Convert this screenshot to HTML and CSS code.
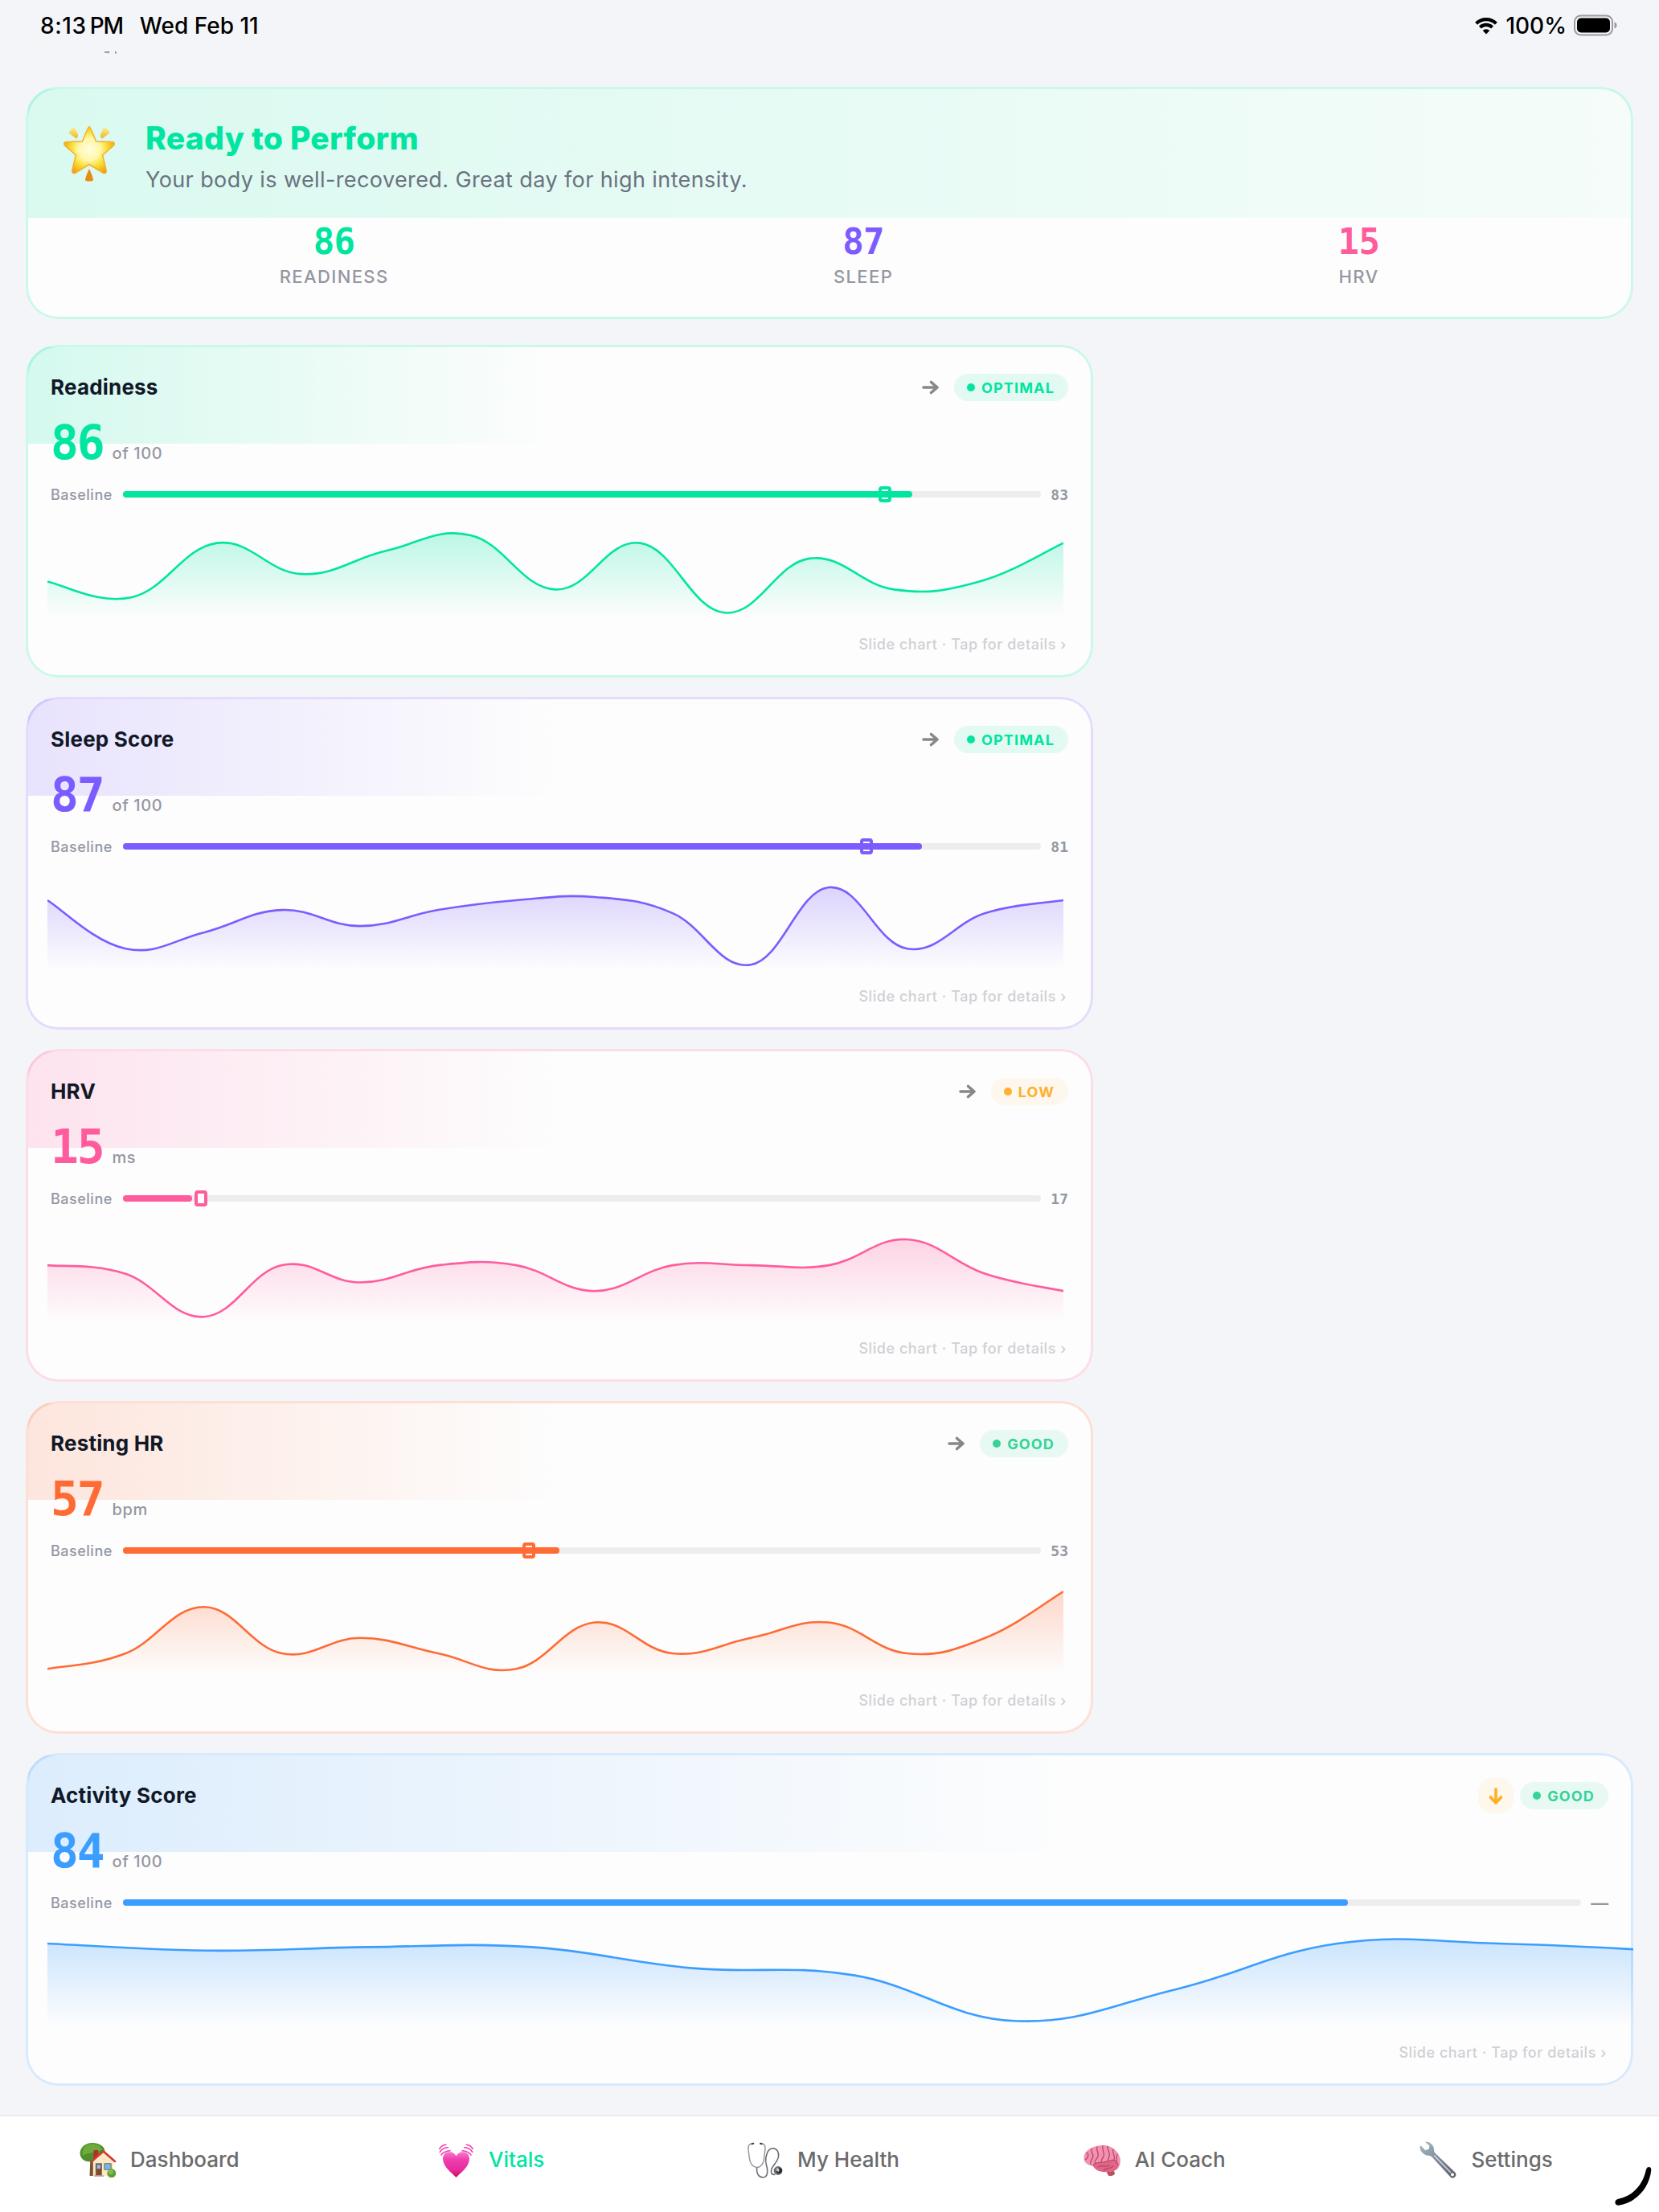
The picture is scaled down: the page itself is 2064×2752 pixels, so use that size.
FILE: index.html
```html
<!DOCTYPE html>
<html lang="en">
<head>
    <meta charset="UTF-8">
    <meta name="viewport" content="width=device-width, initial-scale=1.0">
    <title>Vitals</title>
    <link rel="stylesheet" href="styles.css">
</head>
<body>

    <div class="status-bar">
        <div class="status-left">
            <span class="status-time">8:13<span class="status-pm">PM</span></span>
            <span>Wed Feb 11</span>
        </div>
        <div class="status-right">
            <svg class="wifi" viewBox="0 0 30 22">
                <path d="M2.6 8.2a17.5 17.5 0 0 1 24.8 0" />
                <path d="M7.4 13a10.8 10.8 0 0 1 15.2 0" />
                <path class="wifi-dot" d="M15 21.5l-4.3-4.6a6.2 6.2 0 0 1 8.6 0z" />
            </svg>
            <span>100%</span>
            <svg class="battery" viewBox="0 0 54 28">
                <rect class="battery-shell" x="1" y="1.5" width="47" height="24" rx="7.5" />
                <rect x="4" y="4.5" width="41" height="18" rx="5" />
                <path class="battery-cap" d="M50.5 9.5c2.2.6 3 2.2 3 4s-.8 3.4-3 4z" />
            </svg>
        </div>
    </div>

    <main class="content">
        <svg class="scrolled-text" viewBox="0 0 24 4">
            <path d="M1 .8h5l-1 1.4M15 0v2.500" />
        </svg>

        <section class="hero tint-green">
            <div class="hero-top">
                <svg class="hero-icon" viewBox="0 0 64 70">
                    <defs>
                        <radialGradient id="star" cx="32" cy="30" r="36" gradientUnits="userSpaceOnUse">
                            <stop offset="0" stop-color="#fffde0" />
                            <stop offset=".38" stop-color="#fff7a8" />
                            <stop offset=".62" stop-color="#fbdd33" />
                            <stop offset="1" stop-color="#ee8f10" />
                        </radialGradient>
                        <linearGradient id="ray" x1="0" y1="0" x2="0" y2="1">
                            <stop offset="0" stop-color="#fdf08c" />
                            <stop offset="1" stop-color="#efb52c" />
                        </linearGradient>
                    </defs>
                    <path fill="url(#ray)" d="M13.500 2C10 4 7.500 7 6.500 9.500L16 16.500C19 14 18 12 17.500 10zM50.500 2C54 4 56.500 7 57.500 9.500L48 16.500C45 14 46 12 46.500 10z" />
                    <path fill="#e98a12" d="M32 54c2 4 4 9 5 13.500 0 1.500-1.500 2-5 2s-5-.5-5-2C28 63 30 58 32 54z" />
                    <path fill="url(#star)" stroke="#f3b02a" stroke-width="1.500" stroke-linejoin="round" d="M32 1.500c1.500 0 7.500 16 8.500 18.500 4 .5 18 .2 21 .8 2.500.7 2 3.200.5 4.700L48.500 37c1 4 4.500 16.500 4.700 19.500.2 3-2 3.700-4.200 2.500L32 48.500 15 59c-2.200 1.200-4.400.5-4.200-2.500.2-3 3.700-15.500 4.700-19.500L2 25.500c-1.500-1.500-2-4 .5-4.700 3-.6 17-.3 21-.8C24.500 17.500 30.500 1.500 32 1.500z" />
                </svg>
                <div>
                    <h1>Ready to Perform</h1>
                    <p class="hero-sub">Your body is well-recovered. Great day for high intensity.</p>
                </div>
            </div>
            <div class="hero-stats">
                <div class="stat tint-green"><b>86</b><span>READINESS</span></div>
                <div class="stat tint-purple"><b>87</b><span>SLEEP</span></div>
                <div class="stat tint-pink"><b>15</b><span>HRV</span></div>
            </div>
        </section>

        <div id="cards" class="cards">
            <!-- metric cards are rendered by the script below -->
        </div>
    </main>

    <nav class="tab-bar">
        <a class="tab">
            <svg viewBox="0 0 48 48">
                <path fill="#7a5230" d="M14.500 20h5v24h-6z" />
                <path fill="#4f8f2c" d="M17 3c8 0 15.500 4 15.500 11S25 26 15 26.500C7 27 1.500 22 1.500 16S7 3 17 3z" />
                <path fill="#6cab3c" d="M16 4.500c7 0 12 2.500 13 7-4 3-8 1-12 3.500-4 2-9 1-12 4-2-7 2-14.500 11-14.500z" />
                <path fill="#b3302a" d="M18.500 12H24v8l-5.500 4z" />
                <path fill="#fbe9c6" d="M30.500 14L43 26v18.300H17.800V26z" />
                <path fill="none" stroke="#d8362f" stroke-width="2.600" stroke-linejoin="round" stroke-linecap="round" d="M16 26l14.600-12.600L45 26" />
                <path fill="#8a4526" stroke="#6b6f7c" stroke-width=".8" d="M21.200 28.700h7.300v14.800h-7.300z" />
                <path fill="#7fc4f5" d="M22.700 30.200h4.300v5h-4.300z" />
                <path fill="#6fb7f0" stroke="#8a6a4a" stroke-width="1" d="M31.800 28.700h8.400v7.600h-8.400z" />
                <path fill="#b9aa98" d="M19 43.300h12v1.700H19z" />
                <circle cx="40.800" cy="40.800" r="5.500" fill="#5f9e35" />
                <circle cx="39.800" cy="39.300" r="3" fill="#83bd4c" />
            </svg>
            <span>Dashboard</span>
        </a>
        <a class="tab active">
            <svg viewBox="0 0 48 48">
                <defs>
                    <linearGradient id="heart" x1="0" y1="0" x2="0" y2="1">
                        <stop offset="0" stop-color="#f77cc8" />
                        <stop offset=".3" stop-color="#ef3fb0" />
                        <stop offset=".7" stop-color="#e82a9d" />
                        <stop offset="1" stop-color="#cc0d55" />
                    </linearGradient>
                </defs>
                <path fill="url(#heart)" d="M23.500 46C18 40 7 33 7 22.500c0-5 3.500-8.300 8-8.300 4 0 7 2 8.500 5.300 1.500-3.300 4.500-5.300 8.500-5.300 4.500 0 8 3.300 8 8.300C40 33 29 40 23.500 46z" />
                <path fill="none" stroke="#f03cb2" stroke-width="1.600" stroke-linecap="round" d="M2.800 10.500c1.700-3.200 4.500-5 8-5.300M3.300 14.500c2-3.500 5.500-5.500 10-5.700M5 18c2-3 5.500-5 11-5.300M44.200 10.500c-1.700-3.200-4.500-5-8-5.300M43.700 14.500c-2-3.500-5.500-5.500-10-5.700M42 18c-2-3-5.500-5-11-5.300" />
            </svg>
            <span>Vitals</span>
        </a>
        <a class="tab">
            <svg viewBox="0 0 48 48">
                <path fill="none" stroke="#96999e" stroke-width="1.500" stroke-linecap="round" d="M9 4C4.500 3.500 2.500 6 3 11l1.500 12c.8 6 4.500 10.500 9 10.500s8.300-4 9-10.500L24 10c.3-4-1.500-6.500-5.500-6" />
                <path fill="none" stroke="#696c71" stroke-width="1.600" stroke-linecap="round" d="M13.500 34c-.5 7 2.500 12 7.500 12s6.500-5 5.500-11c-.9-5-3-8-1.500-14.500C26.300 14 29 9.700 33.500 9.700s8 4.300 7 10.300c-1 7-7 10.500-8.700 16-1.300 4.300.5 7 4 6.500" />
                <path fill="none" stroke="#3a3c40" stroke-width="2" stroke-linecap="round" d="M7.500 4.200l1.800-.5M18 3.700l1.800.5" />
                <circle cx="40" cy="37.500" r="5.400" fill="#6a6d73" />
                <circle cx="41.300" cy="37.300" r="3.600" fill="#26282c" />
                <path fill="#c4c8ce" d="M38.800 33.500l3 2.300-1 3.500-3.400-2z" />
            </svg>
            <span>My Health</span>
        </a>
        <a class="tab">
            <svg viewBox="0 0 48 48">
                <path fill="#b5525f" d="M26 33h10l3 8c0 2.500-7 4.500-8.500 2z" />
                <path fill="#f391ae" d="M23 6c10-1 21 6 22.700 17 1 7-2.200 14-8.700 15-5 .8-8 1.700-13 .8-6-.8-10-2.800-12-7C6 31 .5 28 .5 21.500.5 13 11 6.500 23 6z" />
                <path fill="#e06688" d="M12 31c5-5 14-2 22-6 3-1.500 7 1 9.500 6-1 4-4 7-9 7.500-5 .5-8 1.300-12 .3-5-1-9-3-10.500-7.800z" />
                <path fill="none" stroke="#b8486a" stroke-width="1.300" stroke-linecap="round" d="M4 15c3 2 2 7-2 9M10 10.500c-1 5 4 7 1 12-1.500 2-3 4-2 7M17 8c-2 5 3 7 1 12-1 3-4 4-4 8M24 6.500c-2 5 3 8 1 13-1 3-3 4-3 7M30 7.500c-1 5 4 7 2 12-.8 3-2 4-1.500 6.500M37 11c-2 4 3 7 1 13M42 17c-2 3 1 7-1.500 10M12 31c4-6 13-2 21-6 5-2 9 1 10 5M18 33c5-3 9 1 14-2M25 38c2-4 8-2 12-6" />
            </svg>
            <span>AI Coach</span>
        </a>
        <a class="tab">
            <svg viewBox="0 0 48 48">
                <defs>
                    <linearGradient id="steel" x1="0" y1="0" x2="1" y2="1">
                        <stop offset="0" stop-color="#a9bccb" />
                        <stop offset=".5" stop-color="#7c8896" />
                        <stop offset="1" stop-color="#5f5c68" />
                    </linearGradient>
                </defs>
                <path fill="url(#steel)" d="M8.500 1.500c5.500.5 9.500 5 9.500 9.800 0 1.700.3 3 1.500 4.500L44.500 40c3 3.500-2 8.500-5.500 6L15.500 20.500C14 19 12.500 18.700 11 18.700 5.500 18.500.8 14 .5 8.500c0-2 1.200-2.400 2.300-1L7 12l4.500-1 1-4.500-4.200-3.600c-.8-.8-.7-1.400.2-1.400z" />
                <path fill="none" stroke="#cfdce6" stroke-width="1.500" stroke-linecap="round" d="M18.500 19l20 20.500" />
                <circle cx="41" cy="42.500" r="1.900" fill="#fff" />
            </svg>
            <span>Settings</span>
        </a>
    </nav>

    <svg class="corner-stroke" viewBox="0 0 50 50">
        <path d="M43.500 2.500C46.500 1 48.500 2.500 48.300 6 46 28 30 46 8 49.800 3 50 1.500 44 6.500 42 26 38 38 24 42 5z" />
    </svg>

    <script>
        const cards = [
            { title: 'Readiness', tint: 'green', value: 86, unit: 'of 100', fill: 86, mark: 83, baseline: '83', trend: 'flat', status: 'optimal', step: 1264 / 12,
              data: [4, 2, 9, 5, 8, 10, 3, 9, 0, 7, 3, 4, 9] },
            { title: 'Sleep Score', tint: 'purple', value: 87, unit: 'of 100', fill: 87, mark: 81, baseline: '81', trend: 'flat', status: 'optimal', step: 1264 / 13,
              data: [20, 5, 10, 17, 12, 17, 20, 21, 16, 0, 24, 5, 16, 20] },
            { title: 'HRV', tint: 'pink', value: 15, unit: 'ms', fill: 7.5, mark: 8.5, baseline: '17', trend: 'flat', status: 'low', step: 1264 / 13,
              data: [6, 5, 0, 6, 4, 6, 6, 3, 6, 6, 6, 9, 5, 3] },
            { title: 'Resting HR', tint: 'orange', value: 57, unit: 'bpm', fill: 47.5, mark: 44.17, baseline: '53', trend: 'flat', status: 'good', step: 1264 / 13,
              data: [0, 1, 4, 1, 2, 1, 0, 3, 1, 2, 3, 1, 2, 5] },
            { title: 'Activity Score', tint: 'blue', value: 84, unit: 'of 100', fill: 84, mark: null, baseline: '––', trend: 'down', status: 'good', step: 200.6, wide: true,
              data: [22, 20, 21, 21, 15, 13, 0, 9, 22, 22, 20] }
        ];

        // smooth line through the points, each handle is 20% of the neighbours' distance
        function linePath(points) {
            const at = i => points[Math.max(0, Math.min(points.length - 1, i))];
            let d = `M${points[0][0]} ${points[0][1]}`;
            for (let i = 1; i < points.length; i++) {
                const [a, b, c, e] = [at(i - 2), at(i - 1), at(i), at(i + 1)];
                d += `C${b[0] + (c[0] - a[0]) * 0.2} ${b[1] + (c[1] - a[1]) * 0.2} ${c[0] - (e[0] - b[0]) * 0.2} ${c[1] - (e[1] - b[1]) * 0.2} ${c[0]} ${c[1]}`;
            }
            return d;
        }

        function chart(card) {
            const max = Math.max(...card.data);
            const points = card.data.map((v, i) => [i * card.step, 103.3 - v / max * 96.3]);
            const width = card.step * (card.data.length - 1);
            const line = linePath(points);
            return `
                <svg class="chart" width="${width}" height="110" viewBox="0 0 ${width} 110">
                    <linearGradient id="area-${card.tint}" x1="0" y1="0" x2="0" y2="1">
                        <stop class="area-top" offset="0" />
                        <stop class="area-bottom" offset="1" />
                    </linearGradient>
                    <path fill="url(#area-${card.tint})" d="${line}V110H0Z" />
                    <path class="chart-line" d="${line}" />
                </svg>`;
        }

        const arrows = {
            flat: '<path d="M14 22h17M23.500 15.500l7.500 6.500-7.500 6.500" />',
            down: '<path d="M22 14v16M15.500 24l6.500 7 6.500-7" />'
        };

        document.getElementById('cards').innerHTML = cards.map(card => `
            <article class="card tint-${card.tint} ${card.wide ? 'wide' : ''}">
                <div class="card-head">
                    <h2>${card.title}</h2>
                    <svg class="trend ${card.trend}" viewBox="0 0 44 44">${arrows[card.trend]}</svg>
                    <span class="badge ${card.status}">${card.status.toUpperCase()}</span>
                </div>
                <div class="card-value"><b>${card.value}</b><span>${card.unit}</span></div>
                <div class="baseline">
                    <span>Baseline</span>
                    <div class="track">
                        ${card.mark === null ? '' : `<i class="marker" style="left: ${card.mark}%"></i>`}
                        <div class="fill" style="width: ${card.fill}%"></div>
                    </div>
                    <b>${card.baseline}</b>
                </div>
                ${chart(card)}
                <p class="hint">Slide chart · Tap for details ›</p>
            </article>`).join('');
    </script>
</body>
</html>
```

FILE: styles.css
```css
* {
    box-sizing: border-box;
}

body {
    font-family: Inter, "Liberation Sans", sans-serif;
    background-color: #f4f5f9;
    color: #111827;
    display: flex;
    flex-direction: column;
    height: 2752px;
    margin: 0;
    overflow: hidden;
}

h1, h2, p {
    margin: 0;
}

/* --- tints --- */
.tint-green { --tint: 0, 229, 160; }
.tint-purple { --tint: 124, 92, 255; }
.tint-pink { --tint: 255, 92, 158; }
.tint-orange { --tint: 255, 107, 53; }
.tint-blue { --tint: 59, 158, 255; }

/* --- status bar --- */
.status-bar {
    display: flex;
    justify-content: space-between;
    align-items: center;
    height: 64px;
    padding: 0 52px 0 50px;
    color: #000;
    font-size: 28px;
    font-weight: 500;
}

.status-left, .status-right {
    display: flex;
    align-items: center;
}

.status-left {
    gap: 21px;
}

.status-time {
    letter-spacing: 0.6px;
}

.status-pm {
    margin-left: 4px;
    letter-spacing: -1.2px;
}

.status-right {
    gap: 9px;
}

.wifi {
    width: 30px;
    height: 22px;
    fill: none;
    stroke: #000;
    stroke-width: 4.2;
}

.wifi-dot {
    fill: #000;
    stroke: none;
}

.battery {
    width: 54px;
    height: 28px;
}

.battery-shell {
    fill: none;
    stroke: #9b9ca0;
    stroke-width: 2;
}

.battery-cap {
    fill: #9b9ca0;
}

/* --- content --- */
.content {
    flex: 1;
    padding: 0 32px;
}

/* bottom edge of the heading that is scrolled under the status bar */
.scrolled-text {
    display: block;
    width: 24px;
    height: 4px;
    margin: 0 0 40px 97px;
    fill: none;
    stroke: #8e919c;
    stroke-width: 2;
}

.hero, .card {
    position: relative;
    background-color: #fdfdfd;
    border: 3px solid rgba(var(--tint), 0.2);
    border-radius: 40px;
    clip-path: inset(0 round 40px);
}

.hero::before, .card::before {
    content: "";
    position: absolute;
    inset: 0 0 auto 0;
    height: 120px;
    background: linear-gradient(90deg, rgba(var(--tint), 0.16), rgba(var(--tint), 0) 50%);
}

.card.wide::before {
    background: linear-gradient(90deg, rgba(var(--tint), 0.17), rgba(var(--tint), 0) 66%);
}

.hero > *, .card > * {
    position: relative;
}

/* --- hero --- */
.hero {
    height: 289px;
    padding: 37px 36px 36px;
    margin-bottom: 32px;
}

.hero::before {
    height: 160px;
    background: linear-gradient(90deg, rgba(var(--tint), 0.14), rgba(var(--tint), 0.03));
}

.hero-top {
    display: flex;
    gap: 38px;
    padding-left: 8px;
}

.hero-icon {
    width: 64px;
    height: 70px;
    margin-top: 8px;
}

.hero h1 {
    color: rgb(var(--tint));
    font-size: 39px;
    font-weight: 800;
    line-height: 48px;
    letter-spacing: 0.3px;
}

.hero-sub {
    margin-top: 10px;
    color: #6b7280;
    font-size: 27px;
    line-height: 36px;
    letter-spacing: 0.4px;
}

.hero-stats {
    display: flex;
    justify-content: space-around;
    margin-top: 35px;
}

.stat {
    display: flex;
    flex-direction: column;
    align-items: center;
    gap: 6px;
}

.stat b {
    color: rgb(var(--tint));
    font: 700 44px/48px "DejaVu Sans Mono", monospace;
    letter-spacing: -0.6px;
}

.stat span {
    color: #9497a2;
    font-size: 22px;
    font-weight: 500;
    line-height: 26px;
    letter-spacing: 1.4px;
}

/* --- metric cards --- */
.cards {
    display: flex;
    flex-direction: column;
    gap: 24px;
}

.card {
    width: 1328px;
    height: 414px;
    padding: 28px;
}

.card.wide {
    width: 100%;
}

.card-head {
    display: flex;
    align-items: center;
    gap: 8px;
    height: 44px;
}

.card-head h2 {
    flex: 1;
    padding-bottom: 1px;
    font-size: 26px;
    font-weight: 700;
    letter-spacing: 0.2px;
}

.trend {
    width: 44px;
    height: 44px;
    border-radius: 18px;
    fill: none;
    stroke: #888;
    stroke-width: 3.6;
    stroke-linecap: round;
    stroke-linejoin: round;
}

.trend.down {
    background-color: rgba(255, 176, 32, 0.08);
    stroke: #ffb020;
}

.badge {
    --status: 0, 229, 160;
    display: flex;
    align-items: center;
    gap: 8px;
    height: 34px;
    padding: 0 17px 0 16px;
    border-radius: 17px;
    background-color: rgba(var(--status), 0.1);
    color: rgb(var(--status));
    font-size: 18px;
    font-weight: 700;
    letter-spacing: 1.15px;
}

.badge::before {
    content: "";
    width: 10px;
    height: 10px;
    border-radius: 50%;
    background-color: rgb(var(--status));
}

.badge.low {
    --status: 255, 176, 46;
    background-color: rgba(var(--status), 0.08);
}

.badge.good { --status: 52, 211, 153; }

.card-value {
    display: flex;
    align-items: baseline;
    gap: 11px;
    height: 62px;
    margin-top: 16px;
}

.card-value b {
    color: rgb(var(--tint));
    font: 700 58px/62px "DejaVu Sans Mono", monospace;
    letter-spacing: -2.2px;
}

.card-value span {
    color: #9497a2;
    font-size: 20px;
    font-weight: 500;
    letter-spacing: 0.6px;
}

.baseline {
    display: flex;
    align-items: center;
    gap: 12px;
    height: 24px;
    margin-top: 21px;
    color: #9497a2;
    font-size: 18px;
    font-weight: 500;
}

.baseline span {
    width: 78px;
    letter-spacing: 0.5px;
}

.baseline b {
    font: 700 18px "DejaVu Sans Mono", monospace;
}

.track {
    position: relative;
    flex: 1;
    height: 8px;
    border-radius: 4px;
    background-color: #ededee;
}

.fill {
    position: relative;
    height: 8px;
    border-radius: 4px;
    background-color: rgb(var(--tint));
}

.marker {
    position: absolute;
    top: -6px;
    width: 16px;
    height: 20px;
    margin-left: -8px;
    border: 4px solid rgb(var(--tint));
    border-radius: 4px;
    background-color: #fff;
}

.chart {
    display: block;
    margin: 32px 0 0 -4px;
}

.chart-line {
    fill: none;
    stroke: rgb(var(--tint));
    stroke-width: 2.6;
}

.area-top {
    stop-color: rgb(var(--tint));
    stop-opacity: 0.26;
}

.area-bottom {
    stop-color: rgb(var(--tint));
    stop-opacity: 0;
}

.hint {
    margin-top: 21px;
    color: #cfd0d5;
    font-size: 18px;
    font-weight: 500;
    line-height: 24px;
    letter-spacing: 0.55px;
    text-align: right;
    padding-right: 2px;
}

/* --- tab bar --- */
.tab-bar {
    display: flex;
    height: 121px;
    padding-bottom: 12px;
    border-top: 2px solid #ebebed;
    background-color: #fff;
}

.tab {
    flex: 1;
    display: flex;
    align-items: center;
    justify-content: center;
    gap: 16px;
    padding-right: 17px;
    color: #6b6b6b;
    font-size: 26px;
    font-weight: 500;
}

.tab svg {
    width: 48px;
    height: 48px;
}

.tab.active {
    color: #00e5a0;
}

.corner-stroke {
    position: absolute;
    right: 8px;
    bottom: 8px;
    width: 50px;
    height: 50px;
}
```
